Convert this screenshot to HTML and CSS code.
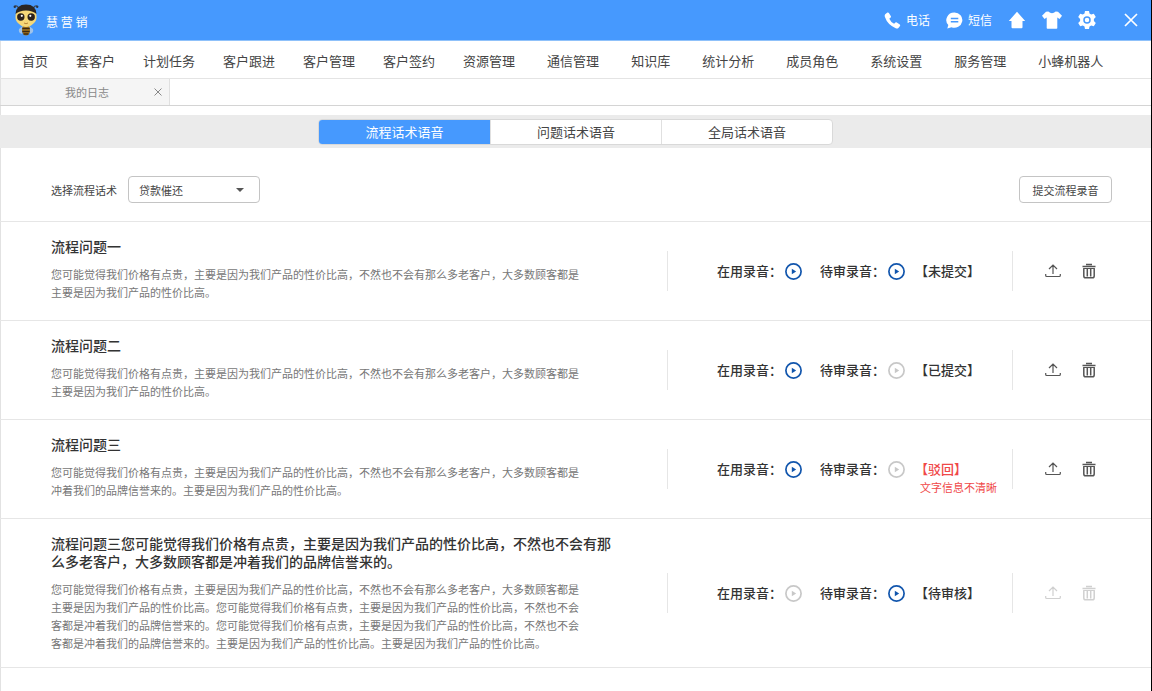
FILE: index.html
```html
<!DOCTYPE html>
<html lang="zh-CN">
<head>
    <meta charset="UTF-8">
    <title>慧营销</title>
    <meta name="viewport" content="width=device-width, initial-scale=1.0">
    <link rel="stylesheet" href="styles.css">
</head>
<body>
    <svg class="sprite" width="0" height="0">
        <symbol id="icon-play" viewBox="0 0 17 17">
            <circle cx="8.5" cy="8.5" r="7.6" fill="none" stroke="currentColor" stroke-width="1.7"/>
            <path d="M6.8 5.7v5.6l4.4-2.8z" fill="currentColor"/>
        </symbol>
        <symbol id="icon-upload" viewBox="0 0 16 16">
            <path d="M8 11V2.2M4 6L8 2l4 4M.7 11v1.500q0 1 1 1h12.600q1 0 1-1V11" fill="none" stroke="currentColor" stroke-width="1.2"/>
        </symbol>
        <symbol id="icon-trash" viewBox="0 0 16 16">
            <path d="M1.500 3.500h13M5 1.500h6" fill="none" stroke="currentColor" stroke-width="1.300"/>
            <path d="M2.800 5.500v7.500q0 1.800 1.800 1.800h6.800q1.800 0 1.800-1.800V5.500M6.300 5.500v8M9.700 5.500v8" fill="none" stroke="currentColor" stroke-width="1.500"/>
            <path d="M2.200 5.500h11.600" stroke="currentColor" stroke-width="1"/>
        </symbol>
    </svg>

    <div class="app">
        <header class="header">
            <svg class="logo" width="28" height="34" viewBox="0 0 28 34">
                <path d="M7 7Q6 2 3 3M21 7q1-5 4-4" fill="none" stroke="#3d4a5c" stroke-width="1.2"/>
                <circle cx="2.8" cy="3.8" r="1.2" fill="#2c3440"/>
                <circle cx="25.2" cy="3.8" r="1.2" fill="#2c3440"/>
                <path d="M11 23l-4 3q-1 4 3 5zM17 23l4 3q1 4-3 5z" fill="#9fc3ea"/>
                <ellipse cx="14" cy="27" rx="4" ry="5.5" fill="#a8791c"/>
                <path d="M10.3 25.5h7.4M10.3 28.5h7.4M11.5 31h5" stroke="#3b2a14" stroke-width="1.3"/>
                <path d="M3.5 13Q4 3 14 3t10.5 10q.5 5-3 7.5Q18 24 14 24t-7.5-3.5Q3 18 3.5 13z" fill="#f6d878"/>
                <path d="M3.5 11Q4 1.500 14 1.500T24.500 11q-4-3.500-10.500-3.500T3.500 11z" fill="#2b2623"/>
                <circle cx="8.8" cy="14" r="3.7" fill="#2b211b"/>
                <circle cx="19.2" cy="14" r="3.7" fill="#2b211b"/>
                <circle cx="9.8" cy="12.8" r="1.1" fill="#fff"/>
                <circle cx="18.3" cy="12.8" r="1.1" fill="#fff"/>
                <path d="M12 20q2 1.500 4 0" fill="none" stroke="#b9863a"/>
            </svg>
            <span class="brand">慧 营 销</span>
            <div class="tools">
                <button class="tool">
                    <svg width="17" height="17" viewBox="0 0 17 17"><path d="M1.200 2.200L3.400.600q.900-.500 1.500.400l2 3.200q.400.800-.300 1.400L5.300 6.700q1.400 3.300 4.800 5l1.300-1.200q.700-.500 1.400-.100l3 2.100q.800.600.200 1.500l-1.600 1.900q-1 .900-2.700.300Q3.600 12.900.800 4.800.400 3 1.200 2.200z" fill="currentColor"/></svg>
                    电话
                </button>
                <button class="tool">
                    <svg width="17" height="17" viewBox="0 0 17 17"><path d="M8.500.500a8 7.600 0 1 1-3 14.700L1.300 16.500l1-3.400A8 7.600 0 0 1 8.500.500z" fill="currentColor"/><path d="M4.800 6.500h7.500M4.800 9.800h7.500" stroke="#4699fe" stroke-width="1.500"/></svg>
                    短信
                </button>
                <button class="tool" aria-label="主页">
                    <svg width="18" height="18" viewBox="0 0 18 18"><path d="M9 .800l8.200 9.200h-2.700v6.200q0 1-1 1h-9q-1 0-1-1V10H.800z" fill="currentColor"/></svg>
                </button>
                <button class="tool" aria-label="皮肤">
                    <svg width="20" height="18" viewBox="0 0 20 18"><path d="M6.300.500q3.700 3.400 7.400 0l2.300.300L20 4.700l-2.500 3.200-2.200-1.300V17q0 .800-.800.800h-9q-.800 0-.800-.800V6.600L2.500 7.900 0 4.700 4 .800z" fill="currentColor"/></svg>
                </button>
                <button class="tool" aria-label="设置">
                    <svg width="18" height="18" viewBox="0 0 18 18"><path d="M7 0h4l.5 2.600 1.700 1 2.600-.9 2 3.400L15.900 8v2l1.900 1.900-2 3.400-2.600-.9-1.700 1L11 18H7l-.5-2.600-1.700-1-2.600.9-2-3.400L2.100 10V8L.2 6.100l2-3.400 2.600.9 1.700-1z" fill="currentColor"/><circle cx="9" cy="9" r="3" fill="none" stroke="#4699fe" stroke-width="1.500"/></svg>
                </button>
                <button class="tool close" aria-label="关闭">
                    <svg width="14" height="14" viewBox="0 0 14 14"><path d="M1 1l12 12M13 1L1 13" stroke="currentColor" stroke-width="1.700"/></svg>
                </button>
            </div>
        </header>

        <nav class="nav">
            <ul>
                <li><a href="#">首页</a></li>
                <li><a href="#">套客户</a></li>
                <li><a href="#">计划任务</a></li>
                <li><a href="#">客户跟进</a></li>
                <li><a href="#">客户管理</a></li>
                <li><a href="#">客户签约</a></li>
                <li><a href="#">资源管理</a></li>
            </ul>
            <ul class="wide">
                <li><a href="#">通信管理</a></li>
                <li><a href="#">知识库</a></li>
                <li><a href="#">统计分析</a></li>
                <li><a href="#">成员角色</a></li>
                <li><a href="#">系统设置</a></li>
                <li><a href="#">服务管理</a></li>
                <li><a href="#">小蜂机器人</a></li>
            </ul>
        </nav>

        <div class="pages">
            <div class="page-tab">
                <a href="#">我的日志</a>
                <button aria-label="关闭标签">
                    <svg width="8" height="8" viewBox="0 0 8 8"><path d="M.5.500l7 7M7.500.500l-7 7" stroke="currentColor"/></svg>
                </button>
            </div>
        </div>

        <div class="switch-bar">
            <div class="switch">
                <button class="active">流程话术语音</button>
                <button>问题话术语音</button>
                <button>全局话术语音</button>
            </div>
        </div>

        <div class="filter">
            <label for="flow">选择流程话术</label>
            <div class="select">
                <select id="flow">
                    <option>贷款催还</option>
                </select>
            </div>
            <button class="submit">提交流程录音</button>
        </div>

        <main>
            <section class="row">
                <div class="text">
                    <h2>流程问题一</h2>
                    <p>您可能觉得我们价格有点贵，主要是因为我们产品的性价比高，不然也不会有那么多老客户，大多数顾客都是<br>主要是因为我们产品的性价比高。</p>
                </div>
                <div class="record">
                    <div class="audio">在用录音：<button aria-label="播放在用录音"><svg><use href="#icon-play"/></svg></button></div>
                    <div class="audio">待审录音：<button aria-label="播放待审录音"><svg><use href="#icon-play"/></svg></button></div>
                    <div class="status">【未提交】</div>
                </div>
                <div class="actions">
                    <button aria-label="上传"><svg><use href="#icon-upload"/></svg></button>
                    <button aria-label="删除"><svg><use href="#icon-trash"/></svg></button>
                </div>
            </section>

            <section class="row">
                <div class="text">
                    <h2>流程问题二</h2>
                    <p>您可能觉得我们价格有点贵，主要是因为我们产品的性价比高，不然也不会有那么多老客户，大多数顾客都是<br>主要是因为我们产品的性价比高。</p>
                </div>
                <div class="record">
                    <div class="audio">在用录音：<button aria-label="播放在用录音"><svg><use href="#icon-play"/></svg></button></div>
                    <div class="audio">待审录音：<button aria-label="播放待审录音" disabled><svg><use href="#icon-play"/></svg></button></div>
                    <div class="status">【已提交】</div>
                </div>
                <div class="actions">
                    <button aria-label="上传"><svg><use href="#icon-upload"/></svg></button>
                    <button aria-label="删除"><svg><use href="#icon-trash"/></svg></button>
                </div>
            </section>

            <section class="row">
                <div class="text">
                    <h2>流程问题三</h2>
                    <p>您可能觉得我们价格有点贵，主要是因为我们产品的性价比高，不然也不会有那么多老客户，大多数顾客都是<br>冲着我们的品牌信誉来的。主要是因为我们产品的性价比高。</p>
                </div>
                <div class="record">
                    <div class="audio">在用录音：<button aria-label="播放在用录音"><svg><use href="#icon-play"/></svg></button></div>
                    <div class="audio">待审录音：<button aria-label="播放待审录音" disabled><svg><use href="#icon-play"/></svg></button></div>
                    <div class="status rejected">【驳回】<small>文字信息不清晰</small></div>
                </div>
                <div class="actions">
                    <button aria-label="上传"><svg><use href="#icon-upload"/></svg></button>
                    <button aria-label="删除"><svg><use href="#icon-trash"/></svg></button>
                </div>
            </section>

            <section class="row">
                <div class="text">
                    <h2>流程问题三您可能觉得我们价格有点贵，主要是因为我们产品的性价比高，不然也不会有那<br>么多老客户，大多数顾客都是冲着我们的品牌信誉来的。</h2>
                    <p>您可能觉得我们价格有点贵，主要是因为我们产品的性价比高，不然也不会有那么多老客户，大多数顾客都是<br>主要是因为我们产品的性价比高。您可能觉得我们价格有点贵，主要是因为我们产品的性价比高，不然也不会<br>客都是冲着我们的品牌信誉来的。您可能觉得我们价格有点贵，主要是因为我们产品的性价比高，不然也不会<br>客都是冲着我们的品牌信誉来的。主要是因为我们产品的性价比高。主要是因为我们产品的性价比高。</p>
                </div>
                <div class="record">
                    <div class="audio">在用录音：<button aria-label="播放在用录音" disabled><svg><use href="#icon-play"/></svg></button></div>
                    <div class="audio">待审录音：<button aria-label="播放待审录音"><svg><use href="#icon-play"/></svg></button></div>
                    <div class="status">【待审核】</div>
                </div>
                <div class="actions">
                    <button aria-label="上传" disabled><svg><use href="#icon-upload"/></svg></button>
                    <button aria-label="删除" disabled><svg><use href="#icon-trash"/></svg></button>
                </div>
            </section>
        </main>
    </div>
</body>
</html>
```

FILE: styles.css
```css
* { box-sizing: border-box; }
body { margin: 0; font-family: "Noto Sans CJK SC", sans-serif; font-size: 11px; line-height: 18px; color: #444; background: #fff; }
button, select { font: inherit; color: inherit; margin: 0; padding: 0; border: none; background: none; cursor: pointer; }
button:disabled { cursor: default; }
a { color: inherit; text-decoration: none; }
ul { list-style: none; margin: 0; padding: 0; }
svg { display: block; flex: none; }
.sprite { position: absolute; }
.app { min-height: 100vh; border-right: 1px solid #000; box-shadow: inset 1px 0 #e2e2e2; }

.header { display: flex; align-items: center; height: 41px; padding: 0 13px 0 12px; background: #4699fe; color: #fff; border-bottom: 1px solid #8fc1fa; }
.brand { margin: 4px 0 0 6px; font-size: 12px; }
.tools { display: flex; align-items: center; gap: 16px; margin-left: auto; }
.tool { display: flex; align-items: center; gap: 5px; font-size: 12px; }
.close { margin-left: 12px; }

.nav { display: flex; height: 38px; padding: 2px 0 0 8px; align-items: center; border-bottom: 1px solid #e4e4e4; font-size: 13px; white-space: nowrap; }
.nav ul { display: flex; }
.nav li { padding: 0 14px; }
.nav .wide { margin-left: 2px; }
.nav .wide li { padding: 0 16px; }

.pages { display: flex; height: 27px; padding-left: 1px; border-bottom: 1px solid #d4d4d4; color: #888; }
.page-tab { display: flex; align-items: center; width: 169px; padding: 0 7px 0 64px; background: #f5f5f5; border-right: 1px solid #e0e0e0; }
.page-tab button { margin-left: auto; }

.switch-bar { display: flex; justify-content: center; margin-top: 9px; padding: 4px 0 3px; background: #ebebeb; }
.switch { display: flex; border: 1px solid #d9d9d9; border-radius: 4px; background: #fff; overflow: hidden; }
.switch button { width: 171px; height: 24px; font-size: 13px; border-left: 1px solid #e0e0e0; }
.switch .active { background: #4699fe; color: #fff; border-left: none; }

.filter { display: flex; align-items: center; gap: 11px; padding: 28px 39px 18px 51px; border-bottom: 1px solid #e6e6e6; }
.select { position: relative; }
.select select { width: 132px; height: 27px; padding-left: 10px; border: 1px solid #c4c4c4; border-radius: 4px; appearance: none; }
.select::after { content: ""; position: absolute; right: 16px; top: 12px; border: 4px solid transparent; border-top-color: #555; border-bottom: none; pointer-events: none; }
.submit { width: 93px; height: 27px; margin-left: auto; border: 1px solid #c4c4c4; border-radius: 4px; }

.row { display: grid; grid-template-columns: 1fr 345px 139px; align-items: center; min-height: 99px; padding-left: 51px; border-bottom: 1px solid #e6e6e6; }
.text { align-self: start; padding: 15px 0; }
.text h2 { margin: 0 0 10px; font-size: 14px; line-height: 18px; font-weight: 500; color: #333; }
.text p { margin: 0; color: #777; }
.record { display: flex; align-items: center; height: 40px; padding-left: 49px; border-left: 1px solid #e6e6e6; font-size: 13px; font-weight: 500; color: #333; white-space: nowrap; }
.audio { display: flex; align-items: center; gap: 3px; margin-right: 18px; }
.audio svg { width: 17px; height: 17px; }
.audio button { color: #1256ad; }
.audio button:disabled { color: #c8c8c8; }
.status { height: 18px; margin-left: -8px; }
.status small { display: block; margin-left: 5px; font-size: 11px; font-weight: 400; }
.rejected { color: #f04848; }
.actions { display: flex; align-items: center; gap: 20px; height: 40px; padding-left: 32px; border-left: 1px solid #e6e6e6; }
.actions svg { width: 16px; height: 16px; }
.actions button { color: #555; }
.actions button:disabled { color: #d0d0d0; }
```
